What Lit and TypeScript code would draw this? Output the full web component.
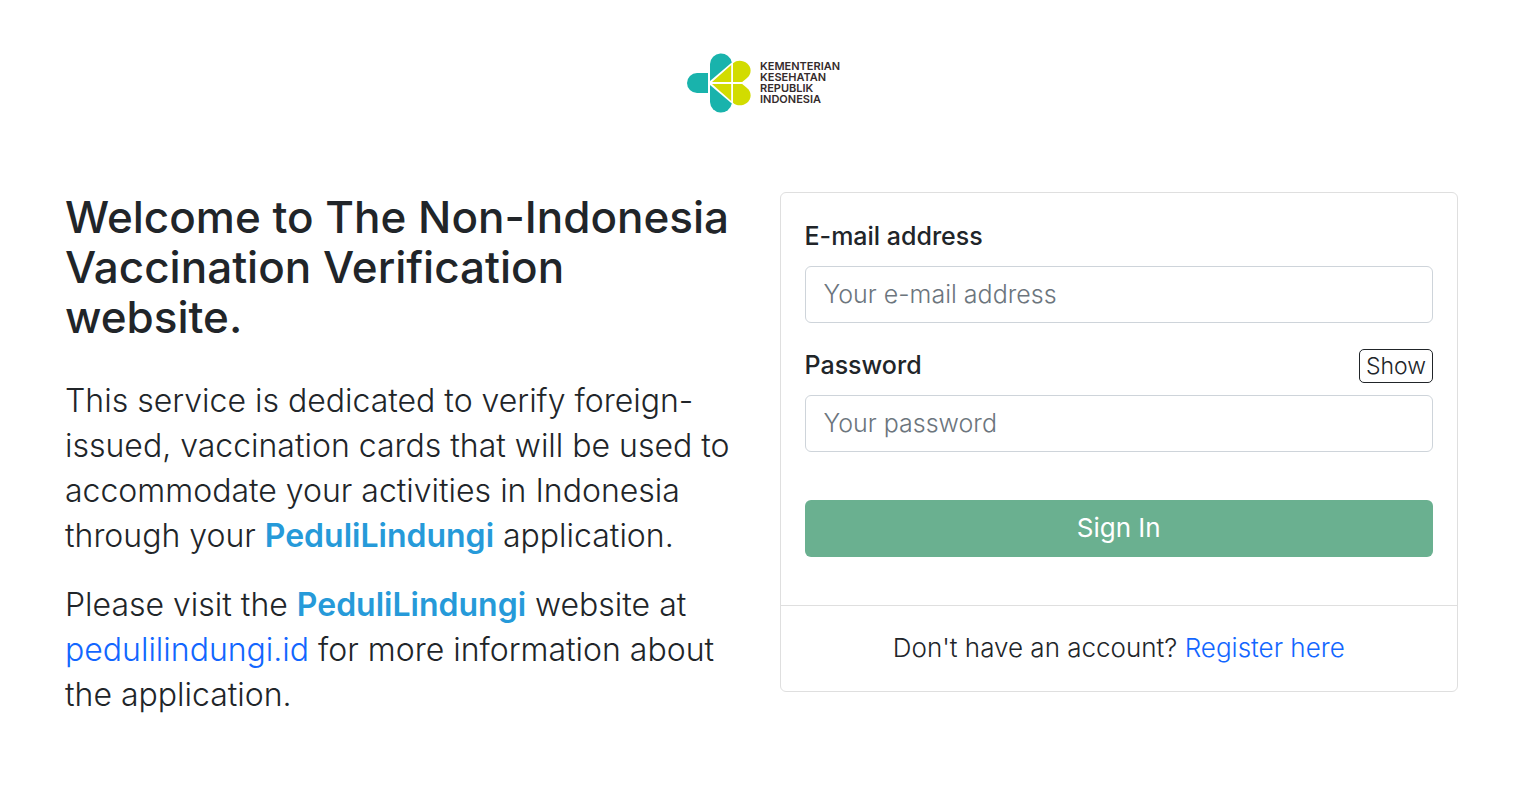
import { LitElement, html, css } from "lit";
import { customElement, state } from "lit/decorators.js";

@customElement("ministry-logo")
export class MinistryLogo extends LitElement {
  static styles = css`
    :host {
      display: block;
    }
    .mark {
      display: block;
      overflow: visible;
    }
    .name {
      font-family: Inter, "Open Sans", sans-serif;
      font-size: 11px;
      font-weight: 600;
      fill: #352b2c;
    }
  `;

  render() {
    return html`
      <svg class="mark" width="150" height="60" viewBox="0 0 150 60" role="img" aria-label="Kementerian Kesehatan Republik Indonesia">
        <g fill="#19b3ac">
          <path d="M21 20H10a10 10 0 0 0 0 20h11z" />
          <path d="M23 28V11a11 11 0 0 1 21.800-1.500z" />
          <path d="M23 32V49a11 11 0 0 0 21.800 1.500z" />
        </g>
        <g fill="#d2dc00">
          <path d="M25 29 44.200 12v17z" />
          <path d="M25 31 44.200 48V31z" />
          <path d="M46 29V10.200C52 4.500 63.600 9 63.600 17.500c0 3.600-1.600 5.900-3.900 7.800L55.200 29z" />
          <path d="M46 31V49.800C52 55.500 63.600 51 63.600 42.500c0-3.600-1.600-5.900-3.900-7.800L55.200 31z" />
        </g>
        <g class="name">
          <text x="73" y="17">KEMENTERIAN</text>
          <text x="73" y="28">KESEHATAN</text>
          <text x="73" y="39">REPUBLIK</text>
          <text x="73" y="50">INDONESIA</text>
        </g>
      </svg>
    `;
  }
}

@customElement("app-root")
export class AppRoot extends LitElement {
  static styles = css`
    :host {
      display: block;
      background: #fff;
      color: #212529;
      font-family: Inter, "Open Sans", sans-serif;
      font-size: 25px;
      font-weight: 300;
      line-height: 36px;
    }
    * {
      box-sizing: border-box;
    }
    .page {
      padding: 53px 80px 48px 65px;
    }
    .header {
      display: flex;
      justify-content: center;
      margin-bottom: 79px;
    }
    .columns {
      display: grid;
      grid-template-columns: minmax(0, 1fr) minmax(0, 1fr);
      gap: 36px;
      align-items: start;
    }
    .title {
      margin: 0 0 36px;
      font-size: 44px;
      font-weight: 500;
      line-height: 50px;
    }
    .lead {
      margin: 0 0 24px;
      font-size: 32px;
      line-height: 45px;
    }
    .brand {
      color: #269ad9;
      font-weight: 600;
    }
    a {
      color: #1266ff;
      text-decoration: none;
    }
    .card {
      border: 1px solid #dfdfdf;
      border-radius: 6px;
    }
    .form {
      padding: 25px 24px 48px;
    }
    .row {
      display: flex;
      justify-content: space-between;
      align-items: flex-end;
      margin-bottom: 12px;
    }
    .label {
      font-weight: 500;
    }
    .input {
      display: block;
      width: 100%;
      height: 57px;
      margin: 0 0 24px;
      padding: 0 18px 2px;
      border: 1px solid #ced4da;
      border-radius: 6px;
      background: #fff;
      color: inherit;
      font: inherit;
    }
    .input::placeholder {
      color: #6c757d;
      opacity: 1;
    }
    .toggle {
      padding: 0 6px;
      border: 1px solid #212529;
      border-radius: 5px;
      background: #fff;
      color: inherit;
      font: inherit;
      font-size: 23px;
      line-height: 32px;
    }
    .submit {
      display: block;
      width: 100%;
      height: 57px;
      margin-top: 48px;
      padding: 0 18px 2px;
      border: 0;
      border-radius: 6px;
      background: #6ab090;
      color: #fff;
      font: inherit;
      font-size: 26px;
      font-weight: 400;
    }
    .footer {
      padding: 24px 24px 25px;
      border-top: 1px solid #dfdfdf;
      font-size: 26px;
      text-align: center;
    }
  `;

  @state() private visible = false;

  render() {
    return html`
      <div class="page">
        <header class="header"><ministry-logo></ministry-logo></header>
        <main class="columns">
          <section>
            <h1 class="title">Welcome to The Non-Indonesia Vaccination Verification website.</h1>
            <p class="lead">
              This service is dedicated to verify foreign-issued, vaccination cards that will be used to accommodate
              your activities in Indonesia through your <span class="brand">PeduliLindungi</span> application.
            </p>
            <p class="lead">
              Please visit the <span class="brand">PeduliLindungi</span> website at
              <a href="#">pedulilindungi.id</a> for more information about the application.
            </p>
          </section>
          <section class="card">
            <form class="form" @submit=${(e: Event) => e.preventDefault()}>
              <div class="row"><label class="label" for="email">E-mail address</label></div>
              <input class="input" id="email" type="email" placeholder="Your e-mail address" />
              <div class="row">
                <label class="label" for="password">Password</label>
                <button class="toggle" type="button" @click=${() => (this.visible = !this.visible)}>
                  ${this.visible ? "Hide" : "Show"}
                </button>
              </div>
              <input class="input" id="password" type=${this.visible ? "text" : "password"} placeholder="Your password" />
              <button class="submit" type="submit">Sign In</button>
            </form>
            <div class="footer">Don't have an account? <a href="#">Register here</a></div>
          </section>
        </main>
      </div>
    `;
  }
}
